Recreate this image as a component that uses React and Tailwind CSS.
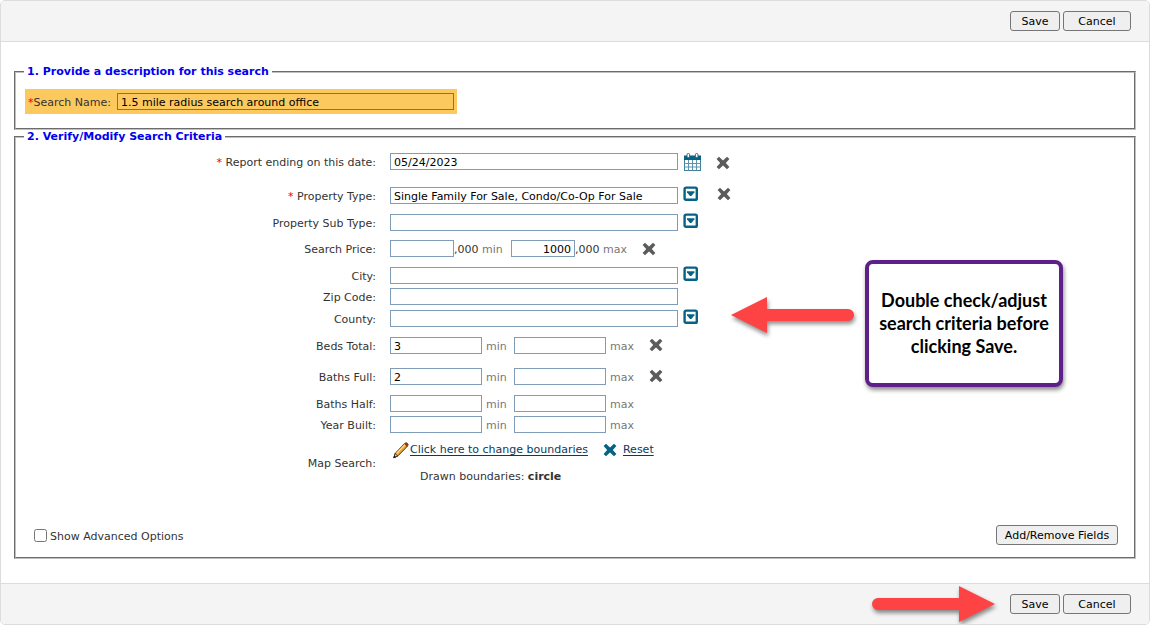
import React, { useState } from 'react';

const RemoveIcon = ({ className }) => (
  <svg className={className} width="14" height="14" viewBox="0 0 14 14" aria-hidden="true">
    <path d="M3 0.8 L7 4.4 L11 0.8 L13.4 3 L9.8 7 L13.4 11 L11 13.2 L7 9.6 L3 13.2 L0.6 11 L4.2 7 L0.6 3 Z" fill="currentColor" />
  </svg>
);

const RemoveButton = ({ name, className }) => (
  <button type="button" aria-label={`Clear ${name}`} className={`shrink-0 text-[#5c5c5c] ${className}`}>
    <RemoveIcon className="block" />
  </button>
);

const PickerButton = ({ name }) => (
  <button type="button" aria-label={`Choose ${name}`} className="mb-[3px] ml-[5px] shrink-0">
    <svg className="block" width="16" height="16" viewBox="0 0 16 16">
      <rect x="1.6" y="1.6" width="12.2" height="12.2" rx="1.4" fill="#fff" stroke="#046285" strokeWidth="2.4" />
      <path d="M4 5.2 H11.4 V6.2 L8.4 10 H7 L4 6.2 Z" fill="#046285" />
    </svg>
  </button>
);

const CalendarButton = () => (
  <button type="button" aria-label="Open calendar" className="ml-[5px] shrink-0">
    <svg className="block" width="18" height="18" viewBox="0 0 18 18">
      <rect x="1.5" y="3.5" width="16" height="14" fill="#fff" stroke="#3f7f9c" />
      <rect x="1" y="2.5" width="17" height="4.5" fill="#046285" />
      <path d="M5.5 7V17.5 M9.5 7V17.5 M13.5 7V17.5 M1.5 10.5H17.5 M1.5 14H17.5" stroke="#5f93aa" />
      <rect x="4" y="0.5" width="2.6" height="4" rx="1.2" fill="#fff" stroke="#46606b" />
      <rect x="12.4" y="0.5" width="2.6" height="4" rx="1.2" fill="#fff" stroke="#46606b" />
    </svg>
  </button>
);

const PencilIcon = () => (
  <svg className="shrink-0" width="17" height="18" viewBox="0 0 17 18" aria-hidden="true">
    <path d="M0.8 16.6 L2.2 12.4 L11.8 2.4 Q13 1.2 14.4 2.4 Q15.6 3.6 14.6 5 L5 14.8 Z" fill="#f2a533" stroke="#4d2508" strokeWidth="1" />
    <path d="M3.6 12.4 L12 3.6" stroke="#ffe3a0" strokeWidth="1.2" />
    <path d="M11.4 2.8 Q13 1.2 14.4 2.4 Q15.6 3.6 14.6 5 L13.8 5.8 Z" fill="#9a3412" />
    <path d="M0.8 16.8 L2.2 12.6 L4.8 15 Z" fill="#e9cfa8" stroke="#33200f" strokeWidth="0.8" />
    <path d="M0.6 17 L1.4 14.4 L3.2 16.2 Z" fill="#111" />
  </svg>
);

const Arrow = ({ className }) => (
  <svg className={className} width="124" height="38" viewBox="0 0 124 38" aria-hidden="true">
    <path d="M0 18 L36 0 V12 H117 A6 6 0 0 1 117 24 H36 V36 Z" fill="#fd4343" />
  </svg>
);

const inputStyle = 'h-[17px] shrink-0 border border-[#7f9db9] bg-white px-[3px] pt-px text-black outline-none';
const buttonStyle = 'h-5 rounded-[3px] border border-[#767676] bg-[#efefef] pt-[2px] text-black hover:bg-[#e5e5e5]';

const Row = ({ label, htmlFor, required, className, children }) => (
  <div className={`flex h-[17px] items-center ${className}`}>
    <label htmlFor={htmlFor} className="mr-[14px] w-[360px] shrink-0 pt-[2px] text-right">
      {required && <span className="text-red-600">* </span>}
      {label}:
    </label>
    {children}
  </div>
);

const RangeFields = ({ id, name, min }) => (
  <>
    <input id={id} defaultValue={min} className={`w-[92px] ${inputStyle}`} />
    <span className="w-8 pt-[2px] pl-1 text-[#777]">min</span>
    <input aria-label={`${name} max`} className={`w-[92px] ${inputStyle}`} />
    <span className="w-10 pt-[2px] pl-1 text-[#777]">max</span>
  </>
);

const ActionBar = ({ className }) => (
  <div className={`flex h-[41px] items-center justify-end gap-[3px] bg-[#f4f4f4] pr-[18px] ${className}`}>
    <button type="button" className={`w-[50px] ${buttonStyle}`}>Save</button>
    <button type="button" className={`w-[68px] ${buttonStyle}`}>Cancel</button>
  </div>
);

const fieldsetStyle = 'mx-[13px] border-2 border-[#c0c0c0] [border-style:groove] px-2';
const legendStyle = 'px-[3px] font-bold text-[#0000ee]';

const App = () => {
  const [advanced, setAdvanced] = useState(false);

  return (
    <form
      className="relative overflow-hidden rounded-[5px] border border-[#dcdcdc] bg-white font-['DejaVu_Sans',Verdana,sans-serif] text-[11px] leading-[14px] text-[#333]"
      onSubmit={(e) => e.preventDefault()}
    >
      <ActionBar className="border-b border-[#dcdcdc]" />

      {/* Description */}
      <fieldset className={`mt-[23px] pb-[14px] ${fieldsetStyle}`}>
        <legend className={legendStyle}>1. Provide a description for this search</legend>
        <div className="mt-[10px] ml-px flex h-[25px] w-[432px] items-center bg-[#fcc95e] px-[3px]">
          <label htmlFor="search-name" className="w-[89px] shrink-0 pt-[2px]">
            <span className="text-red-600">*</span>Search Name:
          </label>
          <input
            id="search-name"
            defaultValue="1.5 mile radius search around office"
            className="h-[17px] min-w-0 flex-1 border border-[#7d7a48] bg-transparent px-[3px] pt-px text-black outline-none"
          />
        </div>
      </fieldset>

      {/* Criteria */}
      <fieldset className={`pb-3 ${fieldsetStyle}`}>
        <legend className={legendStyle}>2. Verify/Modify Search Criteria</legend>

        <div className="-ml-2 pt-[9px]">
          <Row label="Report ending on this date" htmlFor="end-date" required>
            <input id="end-date" defaultValue="05/24/2023" className={`w-72 ${inputStyle}`} />
            <CalendarButton />
            <RemoveButton name="date" className="mt-[2px] ml-[15px]" />
          </Row>
          <Row label="Property Type" htmlFor="property-type" required className="mt-[17px]">
            <input
              id="property-type"
              defaultValue="Single Family For Sale, Condo/Co-Op For Sale"
              className={`w-72 ${inputStyle}`}
            />
            <PickerButton name="property type" />
            <RemoveButton name="property type" className="mb-[3px] ml-[18px]" />
          </Row>
          <Row label="Property Sub Type" htmlFor="sub-type" className="mt-[10px]">
            <input id="sub-type" className={`w-72 ${inputStyle}`} />
            <PickerButton name="property sub type" />
          </Row>
          <Row label="Search Price" htmlFor="price-min" className="mt-[9px]">
            <input id="price-min" className={`w-16 text-right ${inputStyle}`} />
            <span className="w-[57px] pt-[2px]">,000 <span className="text-[#777]">min</span></span>
            <input aria-label="Search Price max" defaultValue="1000" className={`w-16 text-right ${inputStyle}`} />
            <span className="pt-[2px]">,000 <span className="text-[#777]">max</span></span>
            <RemoveButton name="search price" className="ml-[15px]" />
          </Row>
          <Row label="City" htmlFor="city" className="mt-[10px]">
            <input id="city" className={`w-72 ${inputStyle}`} />
            <PickerButton name="city" />
          </Row>
          <Row label="Zip Code" htmlFor="zip" className="mt-1">
            <input id="zip" className={`w-72 ${inputStyle}`} />
          </Row>
          <Row label="County" htmlFor="county" className="mt-[5px]">
            <input id="county" className={`w-72 ${inputStyle}`} />
            <PickerButton name="county" />
          </Row>
          <Row label="Beds Total" htmlFor="beds" className="mt-[10px]">
            <RangeFields id="beds" name="Beds Total" min="3" />
            <RemoveButton name="beds total" className="mb-[2px] ml-[3px]" />
          </Row>
          <Row label="Baths Full" htmlFor="baths-full" className="mt-[14px]">
            <RangeFields id="baths-full" name="Baths Full" min="2" />
            <RemoveButton name="baths full" className="mb-[2px] ml-[3px]" />
          </Row>
          <Row label="Baths Half" htmlFor="baths-half" className="mt-[10px]">
            <RangeFields id="baths-half" name="Baths Half" />
          </Row>
          <Row label="Year Built" htmlFor="year-built" className="mt-1">
            <RangeFields id="year-built" name="Year Built" />
          </Row>

          {/* Map search */}
          <div className="mt-2 flex items-center">
            <span className="mr-[14px] w-[360px] shrink-0 pt-[2px] text-right">Map Search:</span>
            <div>
              <div className="flex h-[18px] items-center pl-[3px]">
                <PencilIcon />
                <a href="#boundaries" className="text-[#0b3a5c] underline underline-offset-2">
                  Click here to change boundaries
                </a>
                <RemoveIcon className="mr-[6px] ml-[15px] text-[#046285]" />
                <a href="#reset" className="text-[#0b3a5c] underline underline-offset-2">Reset</a>
              </div>
              <p className="mt-[11px] pl-[30px]">
                Drawn boundaries: <b>circle</b>
              </p>
            </div>
          </div>
        </div>

        <div className="mt-[41px] flex items-center justify-between pr-2 pl-[10px]">
          <label className="flex items-center gap-[3px]">
            <input
              type="checkbox"
              checked={advanced}
              onChange={(e) => setAdvanced(e.target.checked)}
              className="h-[13px] w-[13px]"
            />
            <span className="pt-1">Show Advanced Options</span>
          </label>
          <button type="button" className={`w-[122px] ${buttonStyle}`}>Add/Remove Fields</button>
        </div>
      </fieldset>

      <ActionBar className="mt-6 border-t border-[#dcdcdc]" />

      {/* Callout and arrows over the form */}
      <div className="absolute top-[259px] right-[86px] flex h-[127px] w-[198px] items-center justify-center rounded-lg border-4 border-[#5f1f8b] bg-white text-center font-['Lato',sans-serif] text-[18px] leading-[23px] font-bold text-black shadow-[1px_3px_4px_rgba(0,0,0,0.45)]">
        <p>
          Double check/adjust
          <br />
          search criteria before
          <br />
          clicking Save.
        </p>
      </div>
      <Arrow className="absolute top-[296px] right-[294px] overflow-visible drop-shadow-[1px_3px_2px_rgba(0,0,0,0.45)]" />
      <Arrow className="absolute right-[154px] bottom-0 -scale-x-100 overflow-visible drop-shadow-[-1px_3px_2px_rgba(0,0,0,0.45)]" />
    </form>
  );
};

export default App;
